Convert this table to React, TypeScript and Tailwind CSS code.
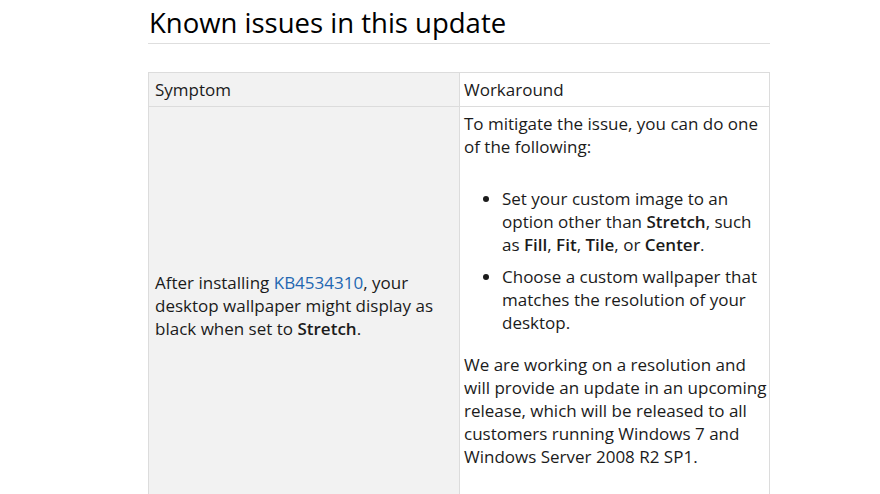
const KnownIssues = () => {
  return (
    <main className="w-[622px] ml-[148px] text-[#1b1b1b] font-['Open_Sans',sans-serif]">
      <h2 className="pt-[5px] pb-[2px] text-[27.5px] leading-[36px] pl-[1px] border-b border-[#dedede] text-black">
        Known issues in this update
      </h2>

      <section className="mt-[28px] grid grid-cols-[311px_309px] border border-[#dcdcdc] text-[17px] leading-[23px]">
        <div className="bg-[#f2f2f2] border-r border-b border-[#dcdcdc] pl-[6px] pt-[5px] pb-[5px]">
          Symptom
        </div>
        <div className="bg-white border-b border-[#dcdcdc] pl-[4px] pt-[5px] pb-[5px]">
          Workaround
        </div>

        <div className="bg-[#f2f2f2] border-r border-[#dcdcdc] pl-[6px] pr-[4px] flex items-center">
          <p>
            After installing{" "}
            <a href="#" className="text-[#2367b1]">
              KB4534310
            </a>
            , your desktop wallpaper might display as black when set to{" "}
            <b className="font-semibold">Stretch</b>.
          </p>
        </div>
        <div className="bg-white pl-[4px] pr-[2px] pt-[5px] pb-[35px]">
          <p>To mitigate the issue, you can do one of the following:</p>
          <ul className="mt-[29px] list-disc pl-[38px]">
            <li>
              Set your custom image to an option other than{" "}
              <b className="font-semibold">Stretch</b>, such as{" "}
              <b className="font-semibold">Fill</b>,{" "}
              <b className="font-semibold">Fit</b>,{" "}
              <b className="font-semibold">Tile</b>, or{" "}
              <b className="font-semibold">Center</b>.
            </li>
            <li className="mt-[9px]">
              Choose a custom wallpaper that matches the resolution of your
              desktop.
            </li>
          </ul>
          <p className="mt-[19px]">
            We are working on a resolution and will provide an update in an
            upcoming release, which will be released to all customers running
            Windows 7 and Windows Server 2008 R2 SP1.
          </p>
        </div>
      </section>
    </main>
  );
};

export default function App() {
  return <KnownIssues />;
}
